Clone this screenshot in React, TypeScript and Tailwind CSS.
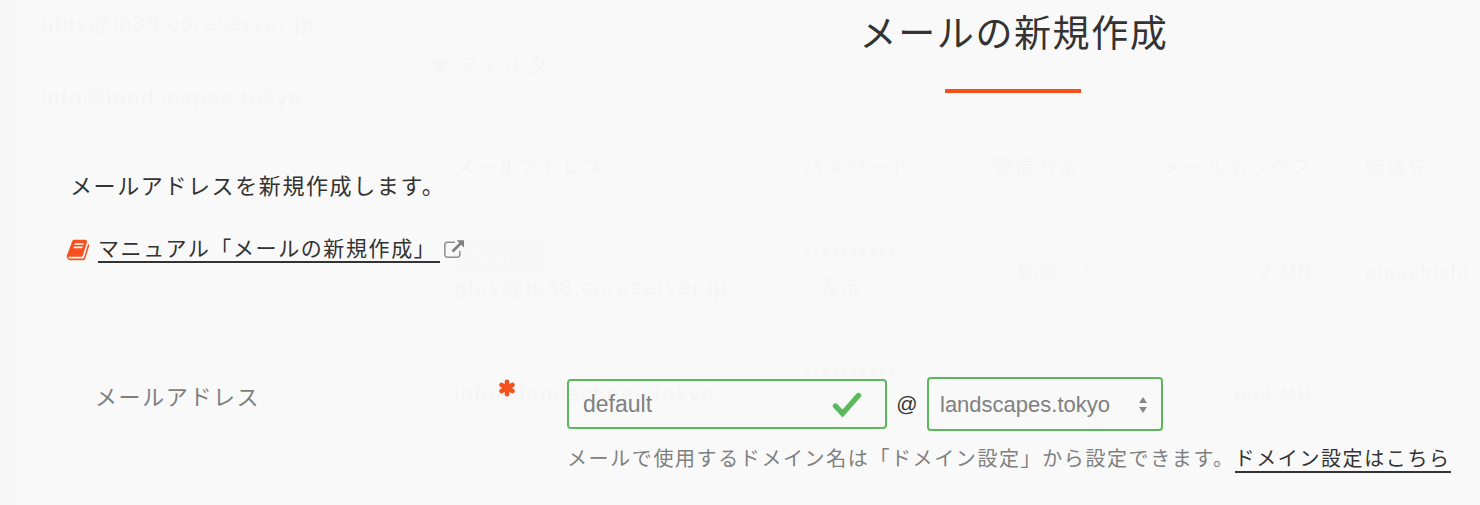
import { useState } from "react"
import { FaFilter } from "react-icons/fa6"

const domains = ["landscapes.tokyo", "m38.coreserver.jp"]

function BookIcon() {
  return (
    <svg viewBox="0 0 1792 1792" className="size-6 fill-[#f4511e]" aria-hidden="true">
      <path d="M1703 478q40 57 18 129l-275 906q-19 64-76.5 107.5t-122.5 43.5h-923q-77 0-148.5-53.5t-99.5-131.5q-24-67-2-127 0-4 3-27t4-37q1-8-3-21.5t-3-19.5q2-11 8-21t16.5-23.5 16.5-23.5q23-38 45-91.5t30-91.5q3-10 .5-30t-.5-28q3-11 17-28t17-23q21-36 42-92t25-90q1-9-2.5-32t.5-28q4-13 22-30.5t22-22.5q19-26 42.5-84.5t27.5-96.5q1-8-3-25.5t-2-26.5q2-8 9-18t18-23 17-21q8-12 16.5-30.5t15-35 16-36 19.5-32 26.5-23.5 36-11.5 47.5 5.5l-1 3q38-9 51-9h761q74 0 114 56t18 130l-274 906q-36 119-71.5 153.5t-128.5 34.5h-869q-27 0-38 15-11 16-1 43 24 70 144 70h923q29 0 56-15.5t35-41.5l300-987q7-22 5-57 38 15 59 43zm-1064 2q-4 13 2 22.5t20 9.5h608q13 0 25.5-9.5t16.5-22.5l21-64q4-13-2-22.5t-20-9.5h-608q-13 0-25.5 9.5t-16.5 22.5zm-83 256q-4 13 2 22.5t20 9.5h608q13 0 25.5-9.5t16.5-22.5l21-64q4-13-2-22.5t-20-9.5h-608q-13 0-25.5 9.5t-16.5 22.5z" />
    </svg>
  )
}

function ExternalIcon() {
  return (
    <svg viewBox="0 0 20 20" className="size-5" fill="none" aria-hidden="true">
      <path d="M11 2.2H3.400A2.600 2.600 0 0 0 .8 4.800v9.800a2.600 2.600 0 0 0 2.600 2.600h9.800a2.600 2.600 0 0 0 2.600-2.600V11" stroke="#909090" strokeWidth="1.500" />
      <path d="M8.500 11.500 17 3" stroke="#808080" strokeWidth="2.600" />
      <path d="M12.600.2H20v7.200z" fill="#808080" />
    </svg>
  )
}

function AsteriskIcon() {
  return (
    <svg viewBox="0 0 18 18" className="mt-0.5 -ml-px size-[18px] stroke-[#f4511e]" strokeWidth="4.600" strokeLinecap="round" aria-hidden="true">
      <path d="M9 2.800v12.400M3.600 5.900l10.800 6.200M3.600 12.100l10.800-6.200" />
    </svg>
  )
}

function CheckIcon() {
  return (
    <svg viewBox="0 0 32 32" className="absolute top-[9px] right-6 size-8" fill="none" aria-hidden="true">
      <path d="M4.500 18l7 7.500L27.500 7.500" stroke="#5cb85c" strokeWidth="5.400" strokeLinecap="round" />
    </svg>
  )
}

/* Mail list that stays faintly visible under the dialog */
function MailList() {
  return (
    <div className="flex overflow-hidden text-[22px] leading-8 whitespace-nowrap text-[#f5f5f5] select-none [grid-area:1/1]" aria-hidden="true">
      <div className="w-[17px] shrink-0 bg-[#f7f7f7]"></div>
      <div className="w-[415px] shrink-0 pt-2 pl-6">
        <p>gtny@m38.coreserver.jp</p>
        <p className="mt-[42px]">info@landscapes.tokyo</p>
      </div>
      <div className="min-w-0 flex-1 pt-[50px]">
        <p className="flex items-center gap-2">
          <FaFilter className="size-4" />
          フィルタ
        </p>
        <table className="mt-[70px] ml-[22px] w-[1200px] table-fixed text-left text-xl leading-8">
          <thead>
            <tr>
              <th className="w-[349px] font-normal">メールアドレス</th>
              <th className="w-[190px] font-normal">パスワード</th>
              <th className="w-[130px] font-normal">受信方法</th>
              <th className="w-[194px] pr-1 text-right font-normal">メールボックス</th>
              <th className="pl-12 font-normal">転送先</th>
            </tr>
          </thead>
          <tbody>
            <tr className="h-[176px]">
              <td>
                <span className="inline-block bg-[#f7f7f7] px-5 leading-7 font-bold text-[#f9f9f9]">Main</span>
                <p className="text-[22px]">gtny@m38.coreserver.jp</p>
              </td>
              <td>
                <p>**********</p>
                <p className="pl-4">表示</p>
              </td>
              <td>
                <span className="inline-block rounded-full border border-[#f6f6f6] px-6 leading-10">転送</span>
              </td>
              <td className="pr-1 text-right">2 MB</td>
              <td className="pl-12">omachishi</td>
            </tr>
            <tr className="h-[68px]">
              <td className="text-[22px]">info@landscapes.tokyo</td>
              <td className="align-top">**********</td>
              <td></td>
              <td className="pr-1 text-right">668 MB</td>
              <td></td>
            </tr>
          </tbody>
        </table>
      </div>
    </div>
  )
}

export default function App() {
  const [account, setAccount] = useState("default")
  const [domain, setDomain] = useState(domains[0])

  return (
    <div className="grid min-h-screen grid-cols-[minmax(0,1fr)] overflow-hidden bg-[#f9f9f9] font-['Liberation_Sans','Noto_Sans_CJK_JP',sans-serif] tracking-widest text-[#333]">
      <MailList />

      <main className="z-10 [grid-area:1/1]">
        <header className="flex flex-col items-center pt-[9px] pl-[548px]">
          <h1 className="text-[37px] leading-[52px]">メールの新規作成</h1>
          <div className="mt-7 mr-0.5 h-1 w-[136px] bg-[#f4511e]"></div>
        </header>

        <p className="mt-[78px] pl-[70px] text-[22px] leading-8">メールアドレスを新規作成します。</p>

        <p className="mt-[31px] flex h-8 items-center pl-[66px] text-[21px]">
          <BookIcon />
          <a href="#manual" className="ml-2 flex items-center gap-1">
            <span className="border-b-2 border-[#333] pr-1 leading-6">マニュアル「メールの新規作成」</span>
            <ExternalIcon />
          </a>
        </p>

        <form className="mt-[111px] grid grid-cols-[404px_68px_1fr] pl-[95px]" onSubmit={(e) => e.preventDefault()}>
          <label htmlFor="account" className="pt-[5px] text-[22px] leading-8 text-[#808080]">
            メールアドレス
          </label>
          <AsteriskIcon />
          <div>
            <div className="flex items-center">
              <div className="relative w-80">
                <input
                  id="account"
                  type="text"
                  value={account}
                  onChange={(e) => setAccount(e.target.value)}
                  className="h-[50px] w-full rounded border-2 border-[#5cb85c] bg-transparent pr-14 pl-[14px] text-[23px] tracking-normal text-[#808080] outline-none"
                />
                <CheckIcon />
              </div>
              <span className="w-10 text-center text-[21px] tracking-normal">@</span>
              <div className="relative w-[236px]">
                <select
                  aria-label="ドメイン"
                  value={domain}
                  onChange={(e) => setDomain(e.target.value)}
                  className="h-[54px] w-full appearance-none rounded border-2 border-[#5cb85c] bg-transparent pr-8 pl-[11px] text-[22px] tracking-normal text-[#808080] outline-none"
                >
                  {domains.map((d) => (
                    <option key={d}>{d}</option>
                  ))}
                </select>
                <svg viewBox="0 0 8 16" className="pointer-events-none absolute top-5 right-4 h-4 w-2 fill-[#888]" aria-hidden="true">
                  <path d="M4 0l4 6H0zM4 16l4-6H0z" />
                </svg>
              </div>
            </div>
            <p className="mt-3 text-xl leading-8 whitespace-nowrap text-[#808080]">
              メールで使用するドメイン名は「ドメイン設定」から設定できます。
              <a href="#domain" className="inline-block border-b-2 border-[#333] leading-6 text-[#333]">ドメイン設定はこちら</a>
            </p>
          </div>
        </form>
      </main>
    </div>
  )
}
